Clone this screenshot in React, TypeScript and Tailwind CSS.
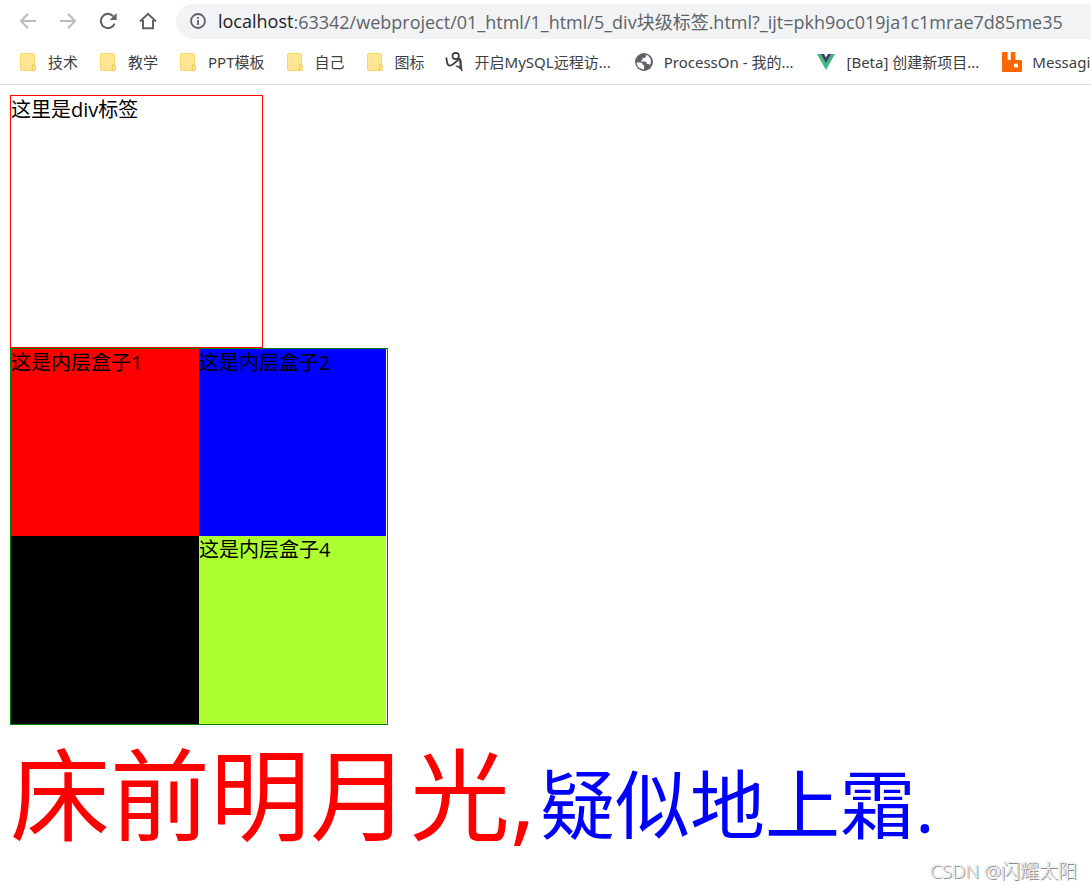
import type { ReactNode } from "react";

function FolderIcon() {
  return (
    <svg className="h-5 w-4 shrink-0" viewBox="0 0 16 20" aria-hidden="true">
      <rect x="0.5" y="1.5" width="14" height="17" rx="1" fill="#ffe693" stroke="#f7d769" />
      <path d="M12.300 18.5v-4.600a1.500 1.500 0 0 1 3.100 0v3a1.600 1.600 0 0 1-1.600 1.600z" fill="#ffe08a" stroke="#f0c94c" strokeWidth="0.9" />
    </svg>
  );
}

function FigureIcon() {
  return (
    <svg className="h-5 w-5 shrink-0" viewBox="0 0 20 20" fill="none" stroke="#3c3c3c" aria-hidden="true">
      <circle cx="10.700" cy="4" r="3.200" strokeWidth="1.700" />
      <path d="M1.300 5.500c.6 5.500 1.200 8.200 3.500 8.200 3 0 6.200-4.500 10.200-7.200" strokeWidth="1.800" />
      <path d="M14.300 7c1.700-.8 1.800.5 2 4.500l.8 7.700c-1.500-2.500-3.500-4.300-6.300-5.200l4.500.2z" fill="#3c3c3c" strokeWidth="0.800" />
    </svg>
  );
}

function GlobeIcon() {
  return (
    <svg className="h-5 w-5 shrink-0" viewBox="0 0 20 20" aria-hidden="true">
      <circle cx="10" cy="10" r="9" fill="#5f6368" />
      <path d="M2.500 10.500H6c1.600 0 2.600.8 2.600 2.200 1.200 0 1.500.5 1.500 1.500v3.100C6 17.300 2.700 14.500 2.500 10.500z" fill="#fff" />
      <path d="M12 2.800v1.300c0 1-.8 1.800-1.900 1.800H8.500v1.700c0 .5-.4.900-.9.900H7v.9h3.800c1.300 0 2 .8 2 1.900v.7H14c.9 0 1.600.5 1.900 1.300 2.200-3.600 1-8.600-3.900-10.500z" fill="#fff" />
    </svg>
  );
}

function VueIcon() {
  return (
    <svg className="h-4 w-[18px] shrink-0" viewBox="0 0 18 16" aria-hidden="true">
      <path d="M0 0h3.600L9 9.400 14.400 0H18L9 16z" fill="#41b883" />
      <path d="M3.600 0H7l2 3.500L11 0h3.400L9 9.400z" fill="#35495e" />
    </svg>
  );
}

function RabbitIcon() {
  return (
    <svg className="h-5 w-5 shrink-0" viewBox="0 0 20 20" aria-hidden="true">
      <path
        d="M1 0h3.800a.8.8 0 0 1 .8.800V7.200a.8.8 0 0 0 .8.800h1.600a.8.800 0 0 0 .8-.8V.8a.8.8 0 0 1 .8-.8h3a.8.8 0 0 1 .8.800V7.200a.8.800 0 0 0 .8.800H19a1 1 0 0 1 1 1v10a1 1 0 0 1-1 1H1a1 1 0 0 1-1-1V1a1 1 0 0 1 1-1z"
        fill="#ff6600"
      />
      <rect x="12" y="11.500" width="4" height="4" rx="1.300" fill="#fff" />
    </svg>
  );
}

function BackIcon({ flipped = false }: { flipped?: boolean }) {
  return (
    <svg className="size-4" viewBox="0 0 16 16" fill="none" stroke="#babcbe" strokeWidth="2" aria-hidden="true">
      {flipped ? <path d="M0 8h15M8 .8 15 8l-7 7.200" /> : <path d="M16 8H1M8 .8 1 8l7 7.200" />}
    </svg>
  );
}

function ReloadIcon() {
  return (
    <svg className="size-[18px]" viewBox="0 0 18 18" aria-hidden="true">
      <path d="M15.600 11.600A7.100 7.100 0 1 1 14.200 4.200" fill="none" stroke="#5f6368" strokeWidth="2.100" />
      <path d="M17.600 1v7h-7z" fill="#5f6368" />
    </svg>
  );
}

function HomeIcon() {
  return (
    <svg className="size-[18px]" viewBox="0 0 18 18" fill="none" stroke="#5f6368" strokeWidth="2" aria-hidden="true">
      <path d="M1 9.500 9 1.800l8 7.700M4 8v8.200h10V8" />
    </svg>
  );
}

function InfoIcon() {
  return (
    <svg className="size-4 shrink-0" viewBox="0 0 16 16" aria-hidden="true">
      <circle cx="8" cy="8" r="7" fill="none" stroke="#5f6368" strokeWidth="1.800" />
      <path d="M7.100 7h1.800v5H7.100zM7.100 4h1.800v1.800H7.100z" fill="#5f6368" />
    </svg>
  );
}

function NavButton({ label, children }: { label: string; children: ReactNode }) {
  return (
    <button type="button" aria-label={label} className="flex size-10 shrink-0 items-center justify-center">
      {children}
    </button>
  );
}

function Bookmark({ icon, children }: { icon: ReactNode; children: ReactNode }) {
  return (
    <a href="#" className="flex shrink-0 items-center gap-[10px] whitespace-nowrap">
      <span className="flex w-5 justify-center">{icon}</span>
      <span>{children}</span>
    </a>
  );
}

export default function App() {
  return (
    <div className="flex min-h-screen flex-col overflow-x-hidden bg-white font-['Open_Sans','Noto_Sans_CJK_SC',sans-serif] text-black">
      <header className="border-b border-[#dadce0]">
        <div className="flex h-[42px] items-center pl-2">
          <NavButton label="后退"><BackIcon /></NavButton>
          <NavButton label="前进"><BackIcon flipped /></NavButton>
          <NavButton label="重新加载"><ReloadIcon /></NavButton>
          <NavButton label="主页"><HomeIcon /></NavButton>
          <div className="ml-2 flex h-[35px] min-w-0 flex-1 items-center rounded-l-full bg-[#f1f3f4] pl-[14px] text-[18px] text-[#5f6368]">
            <InfoIcon />
            <span className="ml-3 text-[#202124]">localhost</span>
            <input
              type="text"
              aria-label="地址"
              defaultValue=":63342/webproject/01_html/1_html/5_div块级标签.html?_ijt=pkh9oc019ja1c1mrae7d85me35"
              className="h-full min-w-0 flex-1 bg-transparent outline-none"
            />
          </div>
        </div>
        <nav
          aria-label="书签"
          className="flex h-[42px] items-center overflow-hidden pb-[2px] pl-[18px] font-['Noto_Sans','Noto_Sans_CJK_SC',sans-serif] text-[15px] text-[#3c4043]"
        >
          <div className="flex shrink-0 gap-5">
            <Bookmark icon={<FolderIcon />}>技术</Bookmark>
            <Bookmark icon={<FolderIcon />}>教学</Bookmark>
            <Bookmark icon={<FolderIcon />}>PPT模板</Bookmark>
            <Bookmark icon={<FolderIcon />}>自己</Bookmark>
            <Bookmark icon={<FolderIcon />}>图标</Bookmark>
          </div>
          <div className="ml-5 flex shrink-0 gap-[23px]">
            <Bookmark icon={<FigureIcon />}>开启MySQL远程访...</Bookmark>
            <Bookmark icon={<GlobeIcon />}>ProcessOn - 我的...</Bookmark>
            <Bookmark icon={<VueIcon />}>[Beta] 创建新项目...</Bookmark>
            <Bookmark icon={<RabbitIcon />}>Messagi</Bookmark>
          </div>
        </nav>
      </header>

      <main className="p-[10px] pb-0 text-[20px] leading-[28px]">
        <div className="h-[253px] w-[253px] border border-[#ff0000]">这里是div标签</div>
        <div className="grid w-[378px] grid-cols-[188px_187px] grid-rows-[187px_188px] border border-[#008000]">
          <div className="bg-[#ff0000]">这是内层盒子1</div>
          <div className="bg-[#0000ff]">这是内层盒子2</div>
          <div className="bg-black">这是内层盒子3</div>
          <div className="bg-[#adff2f]">这是内层盒子4</div>
        </div>
        <p className="flex items-baseline gap-1 pt-[3px] whitespace-nowrap">
          <span className="text-[100px] leading-[132px] text-[#ff0000]">床前明月光,</span>
          <span className="text-[75px] leading-[100px] text-[#0000ff]">疑似地上霜.</span>
        </p>
      </main>
      <footer className="pr-[14px] text-right text-[19px] leading-[22px] font-light text-[#f4f4f4] [text-shadow:1px_1px_0_#888,0_0_1px_#999]">
        CSDN @闪耀太阳
      </footer>
    </div>
  );
}
